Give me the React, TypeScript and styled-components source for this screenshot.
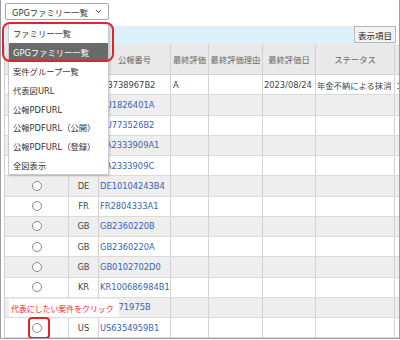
import React from 'react';
import styled, { createGlobalStyle } from 'styled-components';
import { ChevronDown } from 'lucide-react';

const GlobalStyle = createGlobalStyle`
  html, body {
    margin: 0;
    padding: 0;
    background: #fff;
  }
  body {
    font-family: "DejaVu Sans", "Noto Sans CJK JP", sans-serif;
  }
`

const Frame = styled.div`
  position: relative;
  width: 400px;
  height: 339px;
  box-sizing: border-box;
  border: 1px solid #9e9e9e;
  border-top: none;
  padding: 3px 0 0 3px;
  overflow: hidden;
  font-size: 8.3px;
  color: #444;
`

const SelectRow = styled.div`
  height: 23px;
`

const SelectBox = styled.div`
  margin-left: 1px;
  width: 104px;
  height: 17px;
  box-sizing: border-box;
  border: 1px solid #a8a8a8;
  border-radius: 2px;
  display: flex;
  align-items: center;
  justify-content: space-between;
  padding: 0 5px 0 6px;
  color: #333;
`

const Toolbar = styled.div`
  margin-left: 1px;
  width: 391px;
  height: 18px;
  background: #dcf0fa;
  display: flex;
  justify-content: flex-end;
  align-items: flex-start;
`

const ToolButton = styled.button`
  height: 17px;
  margin: 0;
  padding: 0 3px;
  border: 1px solid #b6b6b6;
  background: #f3f3f3;
  font-family: inherit;
  font-size: 8.5px;
  color: #1e1e1e;
`

const Table = styled.div`
  width: 460px;
  border-left: 1px solid #cfcfcf;
`

const columns = '64px 30px 72px 38px 54px 53px 79px 70px'

const HeaderRow = styled.div`
  display: grid;
  grid-template-columns: ${columns};
  height: 31px;
  box-sizing: border-box;
  background: #e9e9e9;
  border-bottom: 1px solid #d4d4d4;
  color: #666;
`

const Row = styled.div<{ $odd: boolean }>`
  display: grid;
  grid-template-columns: ${columns};
  height: 20.25px;
  box-sizing: border-box;
  background: ${({ $odd }) => ($odd ? '#eeeeee' : '#ffffff')};
  border-bottom: 1px solid #dadada;
`

const Cell = styled.div<{ $align?: 'left' | 'center'; $link?: boolean }>`
  display: flex;
  align-items: center;
  justify-content: ${({ $align }) => ($align === 'center' ? 'center' : 'flex-start')};
  padding-left: ${({ $align }) => ($align === 'center' ? '0' : '1px')};
  border-right: 1px solid #d2d2d2;
  white-space: nowrap;
  overflow: hidden;
  color: ${({ $link }) => ($link ? '#3b63b3' : 'inherit')};
`

const Radio = styled.span`
  width: 8px;
  height: 8px;
  border: 1px solid #8a8a8a;
  border-radius: 50%;
  background: #fff;
`

const Menu = styled.div`
  position: absolute;
  left: 7px;
  top: 23px;
  width: 101px;
  box-sizing: border-box;
  background: #fff;
  border: 1px solid #cacaca;
  box-shadow: 1px 1px 2px rgba(0, 0, 0, 0.18);
  color: #333;
`

const MenuItem = styled.div<{ $active?: boolean }>`
  height: 18.8px;
  display: flex;
  align-items: center;
  padding-left: 4px;
  background: ${({ $active }) => ($active ? '#6a6a6a' : 'transparent')};
  color: ${({ $active }) => ($active ? '#fff' : '#333')};
`

const Callout = styled.div<{ $l: number; $t: number; $w: number; $h: number; $r: number }>`
  position: absolute;
  left: ${({ $l }) => $l}px;
  top: ${({ $t }) => $t}px;
  width: ${({ $w }) => $w}px;
  height: ${({ $h }) => $h}px;
  box-sizing: border-box;
  border: 2px solid #e5212b;
  border-radius: ${({ $r }) => $r}px;
`

const Note = styled.div`
  position: absolute;
  left: 8px;
  top: 299px;
  width: 110px;
  height: 18px;
  box-sizing: border-box;
  background: #fff;
  padding-left: 2px;
  display: flex;
  align-items: center;
  color: #ff2323;
  font-size: 7.9px;
`

type Item = {
  country: string
  number: string
  link: boolean
  grade?: string
  date?: string
  status?: string
  extra?: string
}

const items: Item[] = [
  { country: 'JP', number: 'JP3738967B2', link: false, grade: 'A', date: '2023/08/24', status: '年金不納による抹消', extra: 'コメント' },
  { country: 'AU', number: 'AU1826401A', link: true },
  { country: 'AU', number: 'AU773526B2', link: true },
  { country: 'CA', number: 'CA2333909A1', link: true },
  { country: 'CA', number: 'CA2333909C', link: true },
  { country: 'DE', number: 'DE10104243B4', link: true },
  { country: 'FR', number: 'FR2804333A1', link: true },
  { country: 'GB', number: 'GB2360220B', link: true },
  { country: 'GB', number: 'GB2360220A', link: true },
  { country: 'GB', number: 'GB0102702D0', link: true },
  { country: 'KR', number: 'KR100686984B1', link: true },
  { country: 'TW', number: 'TW471975B', link: true },
  { country: 'US', number: 'US6354959B1', link: true },
]

const menuItems = [
  'ファミリー一覧',
  'GPGファミリー一覧',
  '案件グループ一覧',
  '代表図URL',
  '公報PDFURL',
  '公報PDFURL（公開）',
  '公報PDFURL（登録）',
  '全図表示',
]

export default function App() {
  return (
    <Frame>
      <GlobalStyle />
      <SelectRow>
        <SelectBox>
          <span>GPGファミリー一覧</span>
          <ChevronDown size={9} strokeWidth={2.6} color="#333" />
        </SelectBox>
      </SelectRow>
      <Toolbar>
        <ToolButton>表示項目</ToolButton>
      </Toolbar>
      <Table>
        <HeaderRow>
          <Cell $align="center">代表</Cell>
          <Cell $align="center">国</Cell>
          <Cell $align="center">公報番号</Cell>
          <Cell $align="center">最終評価</Cell>
          <Cell $align="center">最終評価理由</Cell>
          <Cell $align="center">最終評価日</Cell>
          <Cell $align="center">ステータス</Cell>
          <Cell />
        </HeaderRow>
        {items.map((it, i) => (
          <Row key={it.number} $odd={i % 2 === 1}>
            <Cell $align="center">
              <Radio />
            </Cell>
            <Cell $align="center">{it.country}</Cell>
            <Cell $link={it.link}>{it.number}</Cell>
            <Cell style={{ paddingLeft: 2 }}>{it.grade}</Cell>
            <Cell />
            <Cell>{it.date}</Cell>
            <Cell>{it.status}</Cell>
            <Cell>{it.extra}</Cell>
          </Row>
        ))}
      </Table>

      <Menu>
        {menuItems.map((m, i) => (
          <MenuItem key={m} $active={i === 1}>
            {m}
          </MenuItem>
        ))}
      </Menu>
      <Callout $l={1} $t={22} $w={112} $h={40} $r={8} />
      <Note>代表にしたい案件をクリック</Note>
      <Callout $l={27} $t={317} $w={22} $h={22} $r={4} />
    </Frame>
  )
}
